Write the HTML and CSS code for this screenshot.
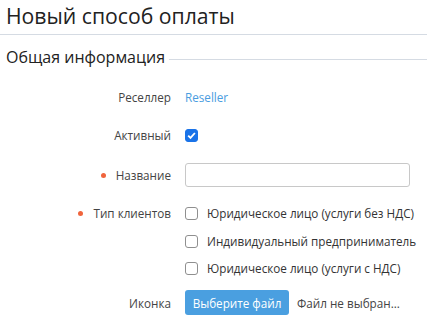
FILE: index.html
```html
<!DOCTYPE html>
<html lang="ru">
<head>
    <meta charset="UTF-8">
    <title>Новый способ оплаты</title>
    <link rel="stylesheet" href="styles.css">
</head>
<body>
    <header class="page-head">
        <h1>Новый способ оплаты</h1>
    </header>
    <section class="group">
        <h2 class="group-title"><span>Общая информация</span></h2>
        <div class="row">
            <div class="label">Реселлер</div>
            <div class="field"><a href="#" class="link">Reseller</a></div>
        </div>
        <div class="row">
            <div class="label">Активный</div>
            <div class="field"><span class="check checked">
                <svg width="11" height="11" viewBox="0 0 11 11"><path d="M2.2 5.6 L4.5 7.9 L8.9 3" fill="none" stroke="#fff" stroke-width="1.8"/></svg>
            </span></div>
        </div>
        <div class="row row-input">
            <div class="label req">Название</div>
            <div class="field"><input type="text" class="text-input"></div>
        </div>
        <div class="row row-top">
            <div class="label req">Тип клиентов</div>
            <div class="field options">
                <label class="option"><span class="check"></span>Юридическое лицо (услуги без НДС)</label>
                <label class="option"><span class="check"></span>Индивидуальный предприниматель</label>
                <label class="option"><span class="check"></span>Юридическое лицо (услуги с НДС)</label>
            </div>
        </div>
        <div class="row row-file">
            <div class="label">Иконка</div>
            <div class="field">
                <button class="btn">Выберите файл</button>
                <span class="file-name">Файл не выбран...</span>
            </div>
        </div>
    </section>
</body>
</html>
```

FILE: styles.css
```css
body { margin: 0; font-family: "Open Sans", Arial, sans-serif; color: #333; background: #fff; font-size: 11.7px; }
.page-head { border-bottom: 1px solid #d5dbe3; padding: 3px 6px 5px; }
h1 { margin: 0; font-size: 21.2px; font-weight: 400; line-height: 26px; color: #222; }
.group { padding: 0 6px; }
.group-title { display: flex; align-items: center; margin: 11px 0 17px; font-size: 16px; font-weight: 400; line-height: 22px; color: #222; }
.group-title::after { content: ""; flex: 1; height: 1px; background: #d5dbe3; margin-left: 4px; margin-right: -6px; position: relative; top: 2px; }
.row { display: flex; align-items: center; min-height: 24px; margin-bottom: 14px; white-space: nowrap; }
.row-input { margin-top: 16px; margin-bottom: 18px; }
.row-top { align-items: flex-start; margin-bottom: 13px; }
.row-top .label { line-height: 17px; }
.label { flex: none; width: 179px; box-sizing: border-box; text-align: right; padding-right: 14px; color: #444; }
.req::before { content: ""; display: inline-block; width: 5px; height: 5px; border-radius: 50%; background: #f0643c; margin-right: 10px; vertical-align: middle; position: relative; top: -1px; }
.field { flex: 1; display: flex; align-items: center; }
.link { color: #4a9de0; text-decoration: none; }
.check { display: inline-flex; align-items: center; justify-content: center; width: 11px; height: 11px; border: 1px solid #8f8f8f; border-radius: 3px; background: #fff; margin-right: 9px; flex: none; }
.check.checked { background: #1a73e8; border-color: #1a73e8; }
.text-input { width: 225px; height: 24px; box-sizing: border-box; border: 1px solid #c8c8c8; border-radius: 3px; font: inherit; }
.options { flex-direction: column; align-items: flex-start; gap: 10.7px; }
.option { display: flex; align-items: center; line-height: 17px; color: #333; }
.btn { background: #4a9fe0; color: #fff; border: none; border-radius: 3px; width: 104px; height: 25px; padding: 0; font: inherit; margin-right: 8px; }
.file-name { color: #444; }
```
